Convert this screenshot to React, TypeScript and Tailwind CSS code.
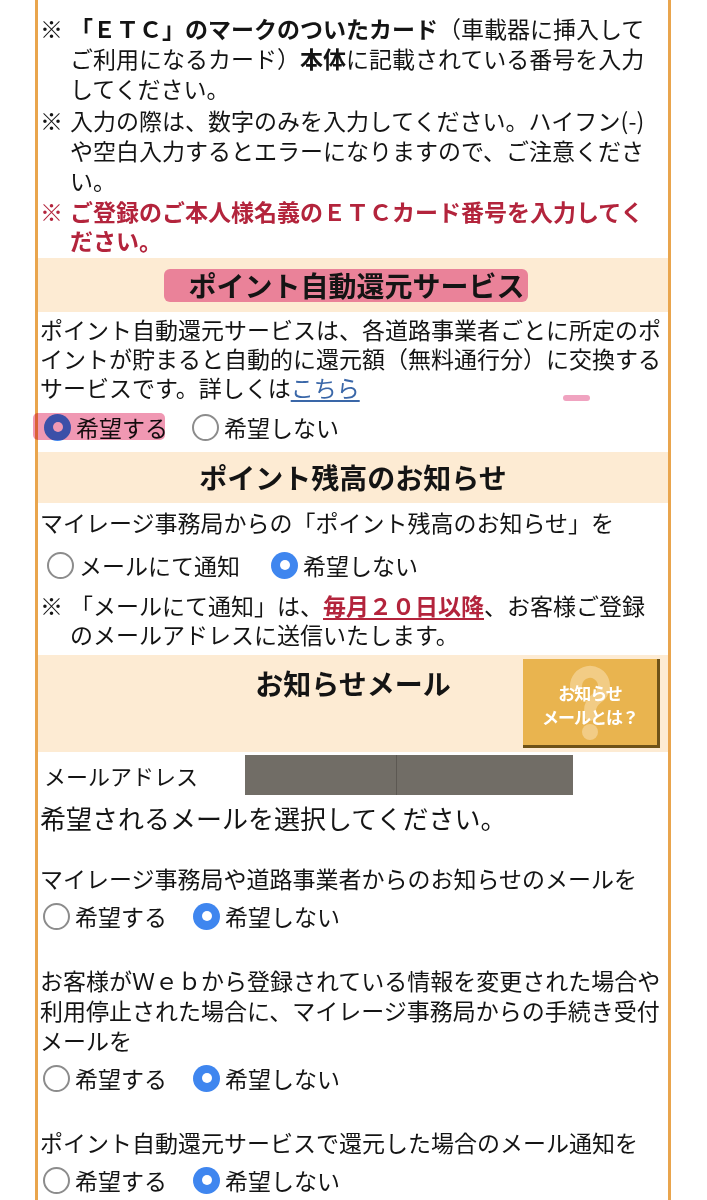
import React from "react";

const Radio = ({ checked }: { checked?: boolean }) =>
  checked ? (
    <span className="w-[27px] h-[27px] shrink-0 rounded-full bg-[#3f86ef] flex items-center justify-center">
      <span className="w-[10px] h-[10px] rounded-full bg-white" />
    </span>
  ) : (
    <span className="w-[27px] h-[27px] shrink-0 rounded-full border-[2.5px] border-[#8c8c8c] bg-white" />
  );

const RadioRow = ({
  a,
  b,
  first,
  gap = "gap-[26px]",
  ml = "ml-[5px]",
  className = "",
}: {
  a: string;
  b: string;
  first: boolean;
  gap?: string;
  ml?: string;
  className?: string;
}) => (
  <div className={`flex items-center h-[36px] ${gap} ${ml} ${className}`}>
    <label className="flex items-center gap-[5px]">
      <Radio checked={first} />
      <span className="text-[23px] leading-[30px]">{a}</span>
    </label>
    <label className="flex items-center gap-[5px]">
      <Radio checked={!first} />
      <span className="text-[23px] leading-[30px]">{b}</span>
    </label>
  </div>
);

export default function App() {
  return (
    <div className="min-h-[1200px] bg-white text-[#141414] font-['Noto_Sans_CJK_JP','Noto_Sans',sans-serif] overflow-hidden">
      <div className="ml-[35px] w-[636px] border-x-[3px] border-[#e9a54d] pt-[13px] pb-[40px]">
        {/* ETC notes */}
        <div className="pl-[2px] text-[23px] leading-[30px]">
          <div className="flex">
            <span className="w-[30px] shrink-0">※</span>
            <p>
              <b className="font-bold">「ＥＴＣ」のマークのついたカード</b>（車載器に挿入して
              <br />
              ご利用になるカード）<b className="font-bold">本体</b>に記載されている番号を入力
              <br />
              してください。
            </p>
          </div>
          <div className="flex mt-[2px]">
            <span className="w-[30px] shrink-0">※</span>
            <p>
              入力の際は、数字のみを入力してください。ハイフン(-)
              <br />
              や空白入力するとエラーになりますので、ご注意くださ
              <br />
              い。
            </p>
          </div>
          <div className="flex mt-[2px] leading-[29px] text-[#b3243c] font-bold">
            <span className="w-[30px] shrink-0 font-normal">※</span>
            <p>
              ご登録のご本人様名義のＥＴＣカード番号を入力してく
              <br />
              ださい。
            </p>
          </div>
        </div>

        {/* Band 1 */}
        <div className="mt-[3px] h-[54px] bg-[#fdebd3] flex items-center justify-center">
          <h2 className="text-[28px] leading-[33px] font-bold bg-[#ea8299] rounded-[6px] pl-[24px] pr-[3px] ml-[-14px]">
            ポイント自動還元サービス
          </h2>
        </div>

        <div className="relative pl-[2px] pt-[3px] text-[23px] leading-[29px]">
          <p>
            ポイント自動還元サービスは、各道路事業者ごとに所定のポ
            <br />
            イントが貯まると自動的に還元額（無料通行分）に交換する
            <br />
            サービスです。詳しくは
            <a className="text-[#3a67a8] underline underline-offset-[3px]">こちら</a>
          </p>
          <span className="absolute left-[525px] top-[83px] w-[27px] h-[6px] rounded-full bg-[#f0a3c0]" />
        </div>
        <div className="relative mt-[7px]">
          <RadioRow a="希望する" b="希望しない" first={true} ml="ml-[6px]" gap="gap-[24px]" />
          <span className="absolute left-[-5px] top-[4px] w-[132px] h-[27px] rounded-[5px] bg-[#ee86a6] mix-blend-multiply opacity-85" />
        </div>

        {/* Band 2 */}
        <div className="mt-[7px] h-[51px] bg-[#fdebd3] flex items-center justify-center">
          <h2 className="text-[28px] leading-[33px] font-bold">ポイント残高のお知らせ</h2>
        </div>
        <div className="pl-[2px] mt-[4px] text-[23px] leading-[30px]">
          <p>マイレージ事務局からの「ポイント残高のお知らせ」を</p>
        </div>
        <RadioRow
          a="メールにて通知"
          b="希望しない"
          first={false}
          ml="ml-[9px]"
          gap="gap-[31px]"
          className="mt-[10px]"
        />
        <div className="pl-[2px] mt-[8px] text-[23px] leading-[29px] flex">
          <span className="w-[30px] shrink-0">※</span>
          <p>
            「メールにて通知」は、
            <span className="text-[#b3243c] font-bold underline decoration-[#b3243c] underline-offset-[3px]">
              毎月２０日以降
            </span>
            、お客様ご登録
            <br />
            のメールアドレスに送信いたします。
          </p>
        </div>

        {/* Band 3 */}
        <div className="mt-[6px] h-[97px] bg-[#fdebd3] grid grid-cols-[1fr_auto_1fr] items-start">
          <div />
          <h2 className="mt-[8px] text-[28px] leading-[40px] font-bold">お知らせメール</h2>
          <button className="justify-self-end mt-[4px] mr-[8px] relative w-[137px] h-[89px] bg-[#e9b44f] border-r-[3px] border-b-[3px] border-[#6e5218] overflow-hidden flex flex-col items-center justify-center">
            <svg
              className="absolute left-[44px] top-[5px]"
              width="46"
              height="78"
              viewBox="0 0 46 78"
              fill="none"
            >
              <path
                d="M9 22 A14 14 0 1 1 30 34 Q23 39 23 47 V51"
                stroke="#f2cc85"
                strokeWidth="12"
                strokeLinecap="round"
              />
              <circle cx="23" cy="68" r="8" fill="#f2cc85" />
            </svg>
            <span className="relative text-white font-bold text-[17px] leading-[24px] tracking-[-1px] mt-[6px]">
              お知らせ
            </span>
            <span className="relative text-white font-bold text-[17px] leading-[24px] tracking-[-1px]">
              メールとは？
            </span>
          </button>
        </div>

        {/* Email row */}
        <div className="flex items-center h-[43px] pt-[3px]">
          <span className="w-[207px] pl-[6px] text-[22px] leading-[30px]">メールアドレス</span>
          <div className="flex h-[40px]">
            <div className="w-[152px] bg-[#716d66] border-r border-[#5c5852]" />
            <div className="w-[176px] bg-[#716d66]" />
          </div>
        </div>

        <p className="pl-[2px] mt-[7px] text-[26px] leading-[32px]">希望されるメールを選択してください。</p>

        <div className="pl-[2px] mt-[29px] text-[23px] leading-[30px]">
          <p>マイレージ事務局や道路事業者からのお知らせのメールを</p>
        </div>
        <RadioRow a="希望する" b="希望しない" first={false} className="mt-[5px]" />

        <div className="pl-[2px] mt-[31px] text-[23px] leading-[30px]">
          <p>
            お客様がＷｅｂから登録されている情報を変更された場合や
            <br />
            利用停止された場合に、マイレージ事務局からの手続き受付
            <br />
            メールを
          </p>
        </div>
        <RadioRow a="希望する" b="希望しない" first={false} className="mt-[5px]" />

        <div className="pl-[2px] mt-[31px] text-[23px] leading-[30px]">
          <p>ポイント自動還元サービスで還元した場合のメール通知を</p>
        </div>
        <RadioRow a="希望する" b="希望しない" first={false} className="mt-[5px]" />
      </div>
    </div>
  );
}
